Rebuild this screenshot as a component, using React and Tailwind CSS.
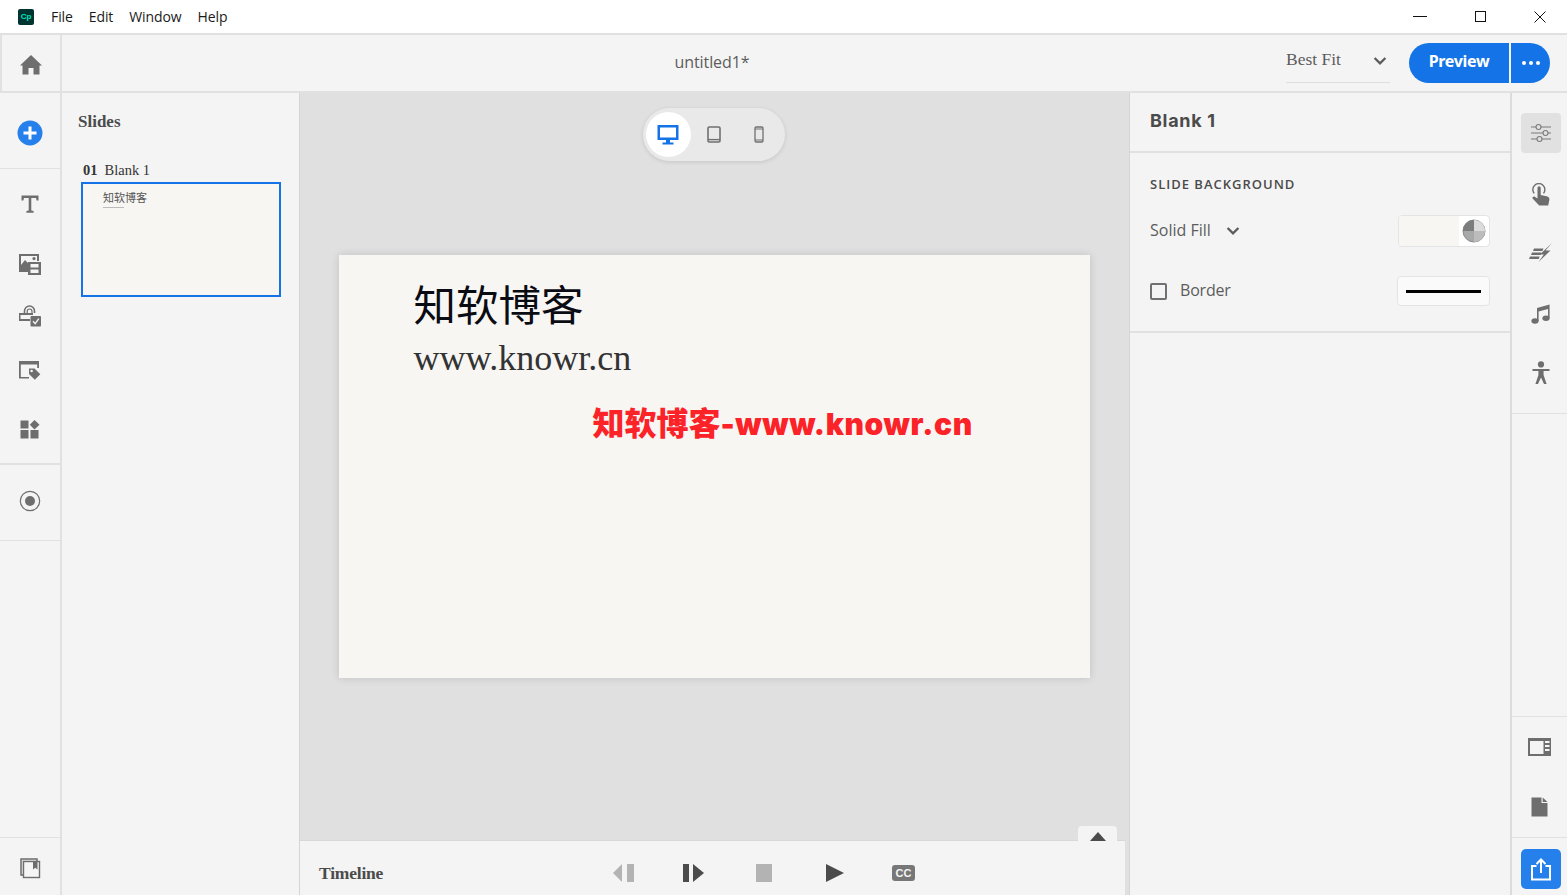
const sans = "font-['Noto_Sans',sans-serif]";

function RailIcon({ children, className = "" }) {
  return <div className={"flex items-center justify-center " + className}>{children}</div>;
}

function Home() {
  return <svg width="24" height="22" viewBox="0 0 24 22" fill="#6e6e6e"><path d="M12 1 L23 11.5 L20.5 11.5 L20.5 20.5 L14.5 20.5 L14.5 14 L9.5 14 L9.5 20.5 L3.5 20.5 L3.5 11.5 L1 11.5 Z" /></svg>;
}
function Plus() {
  return <svg width="26" height="26" viewBox="0 0 26 26"><circle cx="13" cy="13" r="12.5" fill="#2680eb" /><path d="M13 6.5V19.5M6.5 13H19.5" stroke="#fff" strokeWidth="3" /></svg>;
}
function TextT() {
  return <svg width="20" height="20" viewBox="0 0 20 20" fill="#6e6e6e"><path d="M1.5 1.5H18.5V6.5H16.6L16 4H11.3V16.6L13.6 17V18.8H6.4V17L8.7 16.6V4H4L3.4 6.5H1.5Z" /></svg>;
}
function Media() {
  return <svg width="24" height="23" viewBox="0 0 24 23" fill="#6e6e6e"><path d="M1 1H21V8H19V3H3V12L7 7L10 10V19H1Z" /><circle cx="16" cy="5.6" r="1.6" /><rect x="10" y="9" width="13" height="13" /><path d="M12.5 11H20.5V14.5H12.5ZM12.5 16.5H20.5V20H12.5Z" fill="#f4f4f4" /></svg>;
}
function Quiz() {
  return <svg width="24" height="24" viewBox="0 0 24 24"><path d="M6.5 8V6a5 5 0 0 1 10 0v2" fill="none" stroke="#6e6e6e" strokeWidth="1.6" /><path d="M9.2 8V6.4a2.4 2.4 0 0 1 4.8 0V8" fill="none" stroke="#6e6e6e" strokeWidth="1.2" /><path d="M1 8H15V10H2.5V14H12V16H1Z" fill="#6e6e6e" /><rect x="12.5" y="11" width="10.5" height="10.5" rx="1" fill="#6e6e6e" /><path d="M15 16.2L17.2 18.6L20.8 13.6" fill="none" stroke="#f4f4f4" strokeWidth="1.4" /></svg>;
}
function Tag() {
  return <svg width="23" height="21" viewBox="0 0 23 21" fill="#6e6e6e"><path d="M1 1H21V8H19.2V4.5H2.8V17H11V18.5H1Z" /><path d="M11 8.5H16.5L22.3 14.3L16.8 19.8L11 14Z" /><circle cx="13.6" cy="11" r="1.3" fill="#f4f4f4" /></svg>;
}
function Widgets() {
  return <svg width="20" height="19" viewBox="0 0 20 19" fill="#6e6e6e"><rect x="0.5" y="0.5" width="8" height="8" /><rect x="0.5" y="10" width="8" height="8.5" /><rect x="10.5" y="10" width="8" height="8.5" /><path d="M14.5 0L19.5 4.8L14.5 9.4L9.8 4.8Z" /></svg>;
}
function Record() {
  return <svg width="22" height="22" viewBox="0 0 22 22"><circle cx="11" cy="11" r="9.7" fill="none" stroke="#6e6e6e" strokeWidth="1.2" /><circle cx="11" cy="11" r="5" fill="#6e6e6e" /></svg>;
}
function Layers() {
  return <svg width="21" height="21" viewBox="0 0 21 21" fill="none" stroke="#6e6e6e"><rect x="1" y="1" width="16" height="16" strokeWidth="1.5" fill="#e4e4e4" /><rect x="3.5" y="3.5" width="16" height="16" strokeWidth="1.4" fill="#f5f5f5" /><path d="M13 3H17.5V11.5L15.2 9.8L13 11.5Z" fill="#6e6e6e" stroke="none" /></svg>;
}
function Sliders() {
  return <svg width="22" height="20" viewBox="0 0 22 20" fill="none" stroke="#7a7a7a" strokeWidth="1.1"><path d="M1 4H6M11 4H21M1 10H13M18 10H21M1 16H7M12 16H21" /><circle cx="8.5" cy="4" r="2.5" /><circle cx="15.5" cy="10" r="2.5" /><circle cx="9.5" cy="16" r="2.5" /></svg>;
}
function Touch() {
  return <svg width="20" height="24" viewBox="0 0 20 24"><path d="M3.2 10.4a6 6 0 1 1 9.3 0" fill="none" stroke="#6e6e6e" strokeWidth="1.4" /><path d="M6.5 4.8a1.6 1.6 0 0 1 3.2 0V12L15.5 13.2C17.8 13.7 18.8 15 18.3 17.2L17.2 22.5H8.2L1.6 15.6C0.8 14.3 2.5 12.7 3.8 13.7L6.5 15.6Z" fill="#6e6e6e" /></svg>;
}
function Bolt() {
  return <svg width="24" height="20" viewBox="0 0 24 20" fill="#6e6e6e"><path d="M5 5.5H14.5L13.5 8H4ZM3 9.6H12.5L11.6 12H2ZM1 13.6H10.6L9.8 16H0Z" /><path d="M23 0L16.5 7.5H21.5L9.5 19L14.8 11.5H10.8Z" /></svg>;
}
function Music() {
  return <svg width="20" height="20" viewBox="0 0 20 20" fill="#6e6e6e"><path d="M6 4L18.6 0.6V14H17V5L7.6 7.6V17H6Z" /><ellipse cx="4" cy="17" rx="3.6" ry="2.7" /><ellipse cx="15" cy="14.2" rx="3.6" ry="2.7" /></svg>;
}
function Person() {
  return <svg width="20" height="24" viewBox="0 0 20 24" fill="#6e6e6e"><circle cx="10" cy="3.4" r="3.1" /><path d="M1.5 8H18.5V10H12.6V14L15.6 23H13L10 16.5L7 23H4.4L7.4 14V10H1.5Z" /></svg>;
}
function Panel() {
  return <svg width="23" height="18" viewBox="0 0 23 18" fill="#6e6e6e"><path fillRule="evenodd" d="M0 0H23V18H0ZM2 3V16H15.5V3ZM17 3V5H21.5V3ZM17 7V9H21.5V7ZM17 11V13H21.5V11Z" /></svg>;
}
function FileIcon() {
  return <svg width="17" height="20" viewBox="0 0 17 20" fill="#6e6e6e"><path d="M0.5 0.5H10.5V6H16.5V19.5H0.5Z" /><path d="M11.7 0.5L16.5 5H11.7Z" /></svg>;
}
function Share() {
  return <svg width="22" height="24" viewBox="0 0 22 24" fill="none" stroke="#fff" strokeWidth="2"><path d="M6.5 9H2V22.5H20V9H15.5" /><path d="M11 16V2.5" /><path d="M6.5 7L11 2.5L15.5 7" /></svg>;
}
function Chevron({ size = 14 }) {
  return <svg width={size} height={size * 0.7} viewBox="0 0 14 10" fill="none" stroke="#5c5c5c" strokeWidth="2.4"><path d="M1.5 2L7 7.5L12.5 2" /></svg>;
}
function Desktop() {
  return <svg width="22" height="22" viewBox="0 0 22 22" fill="#1473e6"><path fillRule="evenodd" d="M0.5 1H21.5V16H0.5ZM3 3.4V13.6H19V3.4Z" /><path d="M9 16H13V18.5H16.5V20.5H5.5V18.5H9Z" /></svg>;
}
function Tablet() {
  return <svg width="14" height="17" viewBox="0 0 14 17" fill="none" stroke="#707070" strokeWidth="1.6"><rect x="1" y="1" width="12" height="15" rx="1.2" /><path d="M1 13.6H13" strokeWidth="1.4" /></svg>;
}
function Phone() {
  return <svg width="10" height="17" viewBox="0 0 10 17" fill="none" stroke="#707070" strokeWidth="1.3"><rect x="1" y="1" width="8" height="15" rx="1.2" /><path d="M1 3H9M1 14H9" strokeWidth="1.2" /></svg>;
}
function CpLogo() {
  return <div className="w-4 h-4 rounded-[2px] bg-[#003431] flex items-center justify-center text-[8px] font-bold leading-none text-[#00e4bb] font-['Liberation_Sans',sans-serif]">Cp</div>;
}
function Dial() {
  return <svg width="24" height="24" viewBox="0 0 24 24"><circle cx="12" cy="12" r="11" fill="#a8a8a8" stroke="#8a8a8a" /><path d="M12 12L12 1A11 11 0 0 1 23 12Z" fill="#dcdcdc" /><path d="M12 12L23 12A11 11 0 0 1 12 23Z" fill="#bcbcbc" /><path d="M12 12L1 12A11 11 0 0 1 12 1Z" fill="#7c7c7c" /></svg>;
}

export default function App() {
  return (
    <div className={"w-[1567px] h-[895px] overflow-hidden flex flex-col bg-[#f4f4f4] " + sans}>
      {/* Title bar */}
      <div className="h-[33px] shrink-0 bg-white flex items-center pl-[18px]">
        <CpLogo />
        <div className="flex items-center gap-[16px] ml-[17px] text-[14px] text-[#1a1a1a] tracking-[-0.1px] font-['Open_Sans',sans-serif]">
          <span>File</span><span>Edit</span><span>Window</span><span>Help</span>
        </div>
        <div className="ml-auto mr-[-3px] flex items-center">
          <div className="w-[60px] flex justify-center"><div className="w-[14px] h-px bg-[#111]" /></div>
          <div className="w-[60px] flex justify-center"><div className="w-[11px] h-[11px] border border-[#111]" /></div>
          <div className="w-[60px] flex justify-center">
            <svg width="12" height="12" viewBox="0 0 12 12" stroke="#111" strokeWidth="1"><path d="M0.5 0.5L11.5 11.5M11.5 0.5L0.5 11.5" /></svg>
          </div>
        </div>
      </div>

      {/* Header */}
      <div className="h-[60px] shrink-0 flex border-y-2 border-[#e1e1e1] bg-[#f4f4f4]">
        <div className="w-[62px] shrink-0 flex items-center justify-center border-x-2 border-[#e1e1e1] pt-[3px]"><Home /></div>
        <div className="flex-1 flex items-center justify-center pl-[76px] pb-[2px] text-[16px] text-[#5c5c5c] font-['Open_Sans',sans-serif] tracking-[-0.1px]">untitled1*</div>
        <div className="flex items-center pr-[17px]">
          <div className="w-[104px] h-[40px] mt-[-1px] flex items-center justify-between border-b border-[#dedede] pb-[5px] pr-[3px] mr-[19px] text-[17.5px] text-[#5c5c5c] font-['Liberation_Serif',serif]">
            <span>Best Fit</span><span className="pt-[3px]"><Chevron /></span>
          </div>
          <div className="h-[40px] w-[100px] rounded-l-[20px] bg-[#1473e6] flex items-center justify-center pb-[5px] text-white text-[16px] font-bold tracking-[-0.3px] font-['Noto_Sans',sans-serif]">Preview</div>
          <div className="h-[40px] w-[39px] ml-[2px] rounded-r-[20px] bg-[#1473e6] flex items-center justify-center gap-[3px]">
            <span className="w-1 h-1 rounded-full bg-white" /><span className="w-1 h-1 rounded-full bg-white" /><span className="w-1 h-1 rounded-full bg-white" />
          </div>
        </div>
      </div>

      {/* Main */}
      <div className="flex-1 flex min-h-0">
        {/* Left rail */}
        <div className="w-[62px] shrink-0 flex flex-col border-r-2 border-[#e1e1e1] bg-[#f4f4f4]">
          <RailIcon className="h-[76px] border-b border-[#e1e1e1] pt-[4px] pr-[1px]"><Plus /></RailIcon>
          <div className="h-[296px] border-b-2 border-[#e1e1e1] flex flex-col items-center pt-[25px] pr-[1px]">
            <TextT />
            <div className="mt-[39px]"><Media /></div>
            <div className="mt-[29px]"><Quiz /></div>
            <div className="mt-[31px]"><Tag /></div>
            <div className="mt-[39px]"><Widgets /></div>
          </div>
          <RailIcon className="h-[76px] border-b border-[#e1e1e1] pb-[4px]"><Record /></RailIcon>
          <div className="flex-1" />
          <RailIcon className="h-[58px] border-t border-[#e1e1e1] pt-[4px]"><Layers /></RailIcon>
        </div>

        {/* Slides panel */}
        <div className="w-[238px] shrink-0 border-r border-[#d5d5d5] pl-[16px] pt-[19px]">
          <div className="text-[17px] leading-[20px] font-bold text-[#4b4b4b] font-['Liberation_Serif',serif]">Slides</div>
          <div className="mt-[29px] ml-[5px] flex text-[14.5px] leading-[18px] text-[#333] font-['Liberation_Serif',serif]">
            <span className="font-bold">01</span><span className="ml-[7px]">Blank 1</span>
          </div>
          <div className="mt-[3px] ml-[3px] w-[200px] h-[115px] border-2 border-[#1473e6] bg-[#f7f6f3] pl-[20px] pt-[6px]">
            <div className="text-[11px] leading-[15px] text-[#555] font-['Noto_Sans_CJK_SC',sans-serif]">知软博客</div>
            <div className="mt-[2px] w-[21px] h-px bg-[#bbb]" />
          </div>
        </div>

        {/* Center */}
        <div className="w-[830px] shrink-0 flex flex-col bg-[#e0e0e0] border-r border-[#d5d5d5]">
          <div className="flex-1 flex flex-col items-center pt-[15px] min-h-0">
            <div className="w-[142px] h-[53px] mr-[2px] rounded-full bg-[#e9e9e9] shadow-[0_1px_4px_rgba(0,0,0,0.12)] flex items-center pl-[3px]">
              <div className="w-[45px] h-[45px] rounded-full bg-white flex items-center justify-center"><Desktop /></div>
              <div className="ml-[16px] w-[15px] flex justify-center"><Tablet /></div>
              <div className="ml-[32px] w-[10px] flex justify-center"><Phone /></div>
            </div>
            <div className="relative mt-[94px] w-[751px] h-[423px] bg-[#f7f6f3] shadow-[0_0_8px_rgba(0,0,0,0.14)] pl-[75px] pt-[18px] mr-[1px]">
              <div className="text-[42.5px] leading-[60px] text-[#0b0b14] font-['Noto_Sans_CJK_SC',sans-serif]">知软博客</div>
              <div className="mt-[3px] text-[36px] leading-[44px] text-[#333] font-['Liberation_Serif',serif]">www.knowr.cn</div>
              <div className="absolute left-[254px] top-[146px] leading-[40px] font-black text-[#fb2228] whitespace-nowrap font-['Noto_Sans_CJK_SC',sans-serif]">
                <span className="text-[32px]">知软博客</span><span className="text-[30px] font-['Inter',sans-serif] tracking-[0.6px]">-www.knowr.cn</span>
              </div>
            </div>
          </div>
          {/* Timeline */}
          <div className="relative h-[55px] shrink-0 mr-[4px] bg-[#f4f4f4] border-t border-[#d8d8d8] flex items-center pt-[10px]">
            <div className="absolute right-[8px] top-[-15px] w-[39px] h-[15px] rounded-t-[4px] bg-[#f4f4f4] flex items-end justify-center">
              <svg width="16" height="9" viewBox="0 0 16 9" fill="#4b4b4b"><path d="M8 0L16 9H0Z" /></svg>
            </div>
            <div className="ml-[19px] w-[294px] text-[17.5px] font-bold text-[#4b4b4b] tracking-[-0.2px] font-['Liberation_Serif',serif]">Timeline</div>
            <svg width="21" height="18" viewBox="0 0 21 18" fill="#b3b3b3"><path d="M9 0V18L0 9Z" /><rect x="14" y="0" width="7" height="18" /></svg>
            <svg className="ml-[49px]" width="21" height="18" viewBox="0 0 21 18" fill="#4b4b4b"><rect x="0" y="0" width="6" height="18" /><path d="M10 0L21 9L10 18Z" /></svg>
            <svg className="ml-[52px]" width="16" height="18" viewBox="0 0 16 18" fill="#b3b3b3"><rect width="16" height="18" /></svg>
            <svg className="ml-[54px]" width="18" height="18" viewBox="0 0 18 18" fill="#4b4b4b"><path d="M0 0L18 9L0 18Z" /></svg>
            <div className="ml-[48px] w-[23px] h-[16px] rounded-[3px] bg-[#777] flex items-center justify-center text-[11px] leading-none font-bold text-[#f4f4f4] font-['Liberation_Sans',sans-serif]">CC</div>
          </div>
        </div>

        {/* Properties */}
        <div className="w-[382px] shrink-0 border-r-2 border-[#dcdcdc]">
          <div className="h-[60px] border-b-2 border-[#e1e1e1] pl-[20px] pt-[16px] text-[18px] leading-[24px] font-bold tracking-[0.7px] text-[#4b4b4b] font-['Inter',sans-serif]">Blank 1</div>
          <div className="h-[180px] border-b-2 border-[#e1e1e1] pl-[20px] pr-[20px] pt-[22px]">
            <div className="text-[13px] leading-[18px] font-semibold tracking-[1px] text-[#4b4b4b] font-['Open_Sans',sans-serif]">SLIDE BACKGROUND</div>
            <div className="mt-[22px] flex items-center h-[32px]">
              <span className="pb-[2px] text-[16px] text-[#5c5c5c] font-['Open_Sans',sans-serif]">Solid Fill</span>
              <span className="ml-[15px]"><Chevron /></span>
              <div className="ml-auto w-[92px] h-[32px] rounded-[4px] border border-[#e4e4e4] bg-white flex items-center overflow-hidden">
                <div className="w-[60px] h-full bg-[#f7f6f3]" />
                <div className="ml-[3px]"><Dial /></div>
              </div>
            </div>
            <div className="mt-[29px] flex items-center h-[30px]">
              <div className="w-[17px] h-[17px] rounded-[2px] border-2 border-[#707070]" />
              <span className="ml-[13px] pb-[2px] text-[16px] text-[#5c5c5c] tracking-[-0.2px] font-['Open_Sans',sans-serif]">Border</span>
              <div className="ml-auto w-[93px] h-[30px] rounded-[4px] border border-[#e4e4e4] bg-[#fafafa] flex items-center justify-center">
                <div className="w-[75px] h-[3px] bg-black" />
              </div>
            </div>
          </div>
        </div>

        {/* Right rail */}
        <div className="flex-1 flex flex-col">
          <div className="h-[321px] border-b border-[#e1e1e1] flex flex-col items-center pl-[2px]">
            <div className="mt-[20px] w-[40px] h-[40px] rounded-[4px] bg-[#e1e1e1] flex items-center justify-center"><Sliders /></div>
            <div className="mt-[30px]"><Touch /></div>
            <div className="mt-[36px]"><Bolt /></div>
            <div className="mt-[41px]"><Music /></div>
            <div className="mt-[37px]"><Person /></div>
          </div>
          <div className="flex-1" />
          <div className="h-[121px] border-t border-[#e1e1e1] flex flex-col items-center">
            <div className="mt-[21px]"><Panel /></div>
            <div className="mt-[41px]"><FileIcon /></div>
          </div>
          <div className="h-[58px] border-t border-[#e1e1e1] flex items-center justify-center pt-[4px] pl-[2px]">
            <div className="w-[40px] h-[40px] rounded-[5px] bg-[#2680eb] flex items-center justify-center"><Share /></div>
          </div>
        </div>
      </div>
    </div>
  );
}
